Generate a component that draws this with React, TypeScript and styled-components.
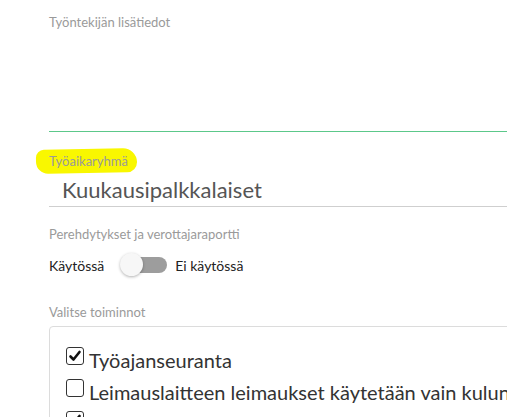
import React from "react";
import styled, { createGlobalStyle } from "styled-components";

const Global = createGlobalStyle`
  html, body { margin: 0; padding: 0; background: #fff; }
  body { font-family: Lato, "Open Sans", sans-serif; overflow: hidden; }
`;

const Page = styled.div`
  width: 507px;
  height: 417px;
  overflow: hidden;
  padding-left: 49px;
  box-sizing: border-box;
`;

const FieldLabel = styled.div<{ $top: number }>`
  font-size: 13px;
  line-height: 16px;
  color: #9a9a9a;
  margin-top: ${(p) => p.$top}px;
  white-space: nowrap;
`;

const HighlightWrap = styled.div`
  position: relative;
  z-index: 0;
`;

const Highlight = styled.span`
  display: inline-block;
  position: relative;
  &::before {
    content: "";
    position: absolute;
    left: -13px;
    right: -9px;
    top: -4px;
    bottom: -4px;
    background: #f9f700;
    border-radius: 8px 14px 10px 12px;
    transform: rotate(-1deg);
    z-index: -1;
  }
`;

const TextArea = styled.div`
  height: 101px;
  width: 600px;
  border-bottom: 1px solid #5cc88a;
`;

const SelectBox = styled.div`
  width: 600px;
  height: 33px;
  margin-top: 5px;
  border-bottom: 1px solid #cfcfcf;
  padding-left: 13px;
  font-size: 22px;
  line-height: 31px;
  color: #555;
  box-sizing: border-box;
`;

const ToggleRow = styled.div`
  display: flex;
  align-items: center;
  height: 26px;
  margin-top: 10px;
  font-size: 14px;
  color: #222;
  white-space: nowrap;
`;

const Track = styled.div`
  position: relative;
  width: 36px;
  height: 16px;
  border-radius: 8px;
  background: #9d9d9d;
  margin: 0 8px 0 27px;
`;

const Thumb = styled.div`
  position: absolute;
  left: -11px;
  top: -4px;
  width: 23px;
  height: 23px;
  border-radius: 50%;
  background: #f7f7f7;
  box-shadow: 0 1px 3px rgba(0, 0, 0, 0.3);
`;

const OptionsBox = styled.div`
  margin-top: 6px;
  width: 620px;
  height: 140px;
  border: 1px solid #dcdcdc;
  border-radius: 4px;
  padding: 17px 0 0 16px;
  box-sizing: border-box;
`;

const Option = styled.div`
  display: flex;
  align-items: center;
  height: 32px;
  font-size: 20px;
  color: #333;
  white-space: nowrap;
`;

const Box = styled.span`
  display: inline-flex;
  align-items: center;
  justify-content: center;
  width: 18px;
  height: 18px;
  border: 1.5px solid #333;
  border-radius: 3px;
  box-sizing: border-box;
  margin-right: 5px;
  margin-top: -8px;
  flex-shrink: 0;
`;

const Check = () => (
  <svg width="14" height="14" viewBox="0 0 14 14">
    <path d="M2.5 7.5 L5.5 10.5 L11.5 3" fill="none" stroke="#111" strokeWidth="2.6" strokeLinecap="round" strokeLinejoin="round" />
  </svg>
);

const options = [
  { label: "Työajanseuranta", checked: true },
  { label: "Leimauslaitteen leimaukset käytetään vain kulunvalvontaan", checked: false },
  { label: "Projektit", checked: true },
];

export default function App() {
  return (
    <Page>
      <Global />
      <FieldLabel $top={14}>Työntekijän lisätiedot</FieldLabel>
      <TextArea />
      <HighlightWrap>
        <FieldLabel $top={21}>
          <Highlight>Työaikaryhmä</Highlight>
        </FieldLabel>
      </HighlightWrap>
      <SelectBox>Kuukausipalkkalaiset</SelectBox>
      <FieldLabel $top={19}>Perehdytykset ja verottajaraportti</FieldLabel>
      <ToggleRow>
        Käytössä
        <Track>
          <Thumb />
        </Track>
        Ei käytössä
      </ToggleRow>
      <FieldLabel $top={26}>Valitse toiminnot</FieldLabel>
      <OptionsBox>
        {options.map((o) => (
          <Option key={o.label}>
            <Box>{o.checked && <Check />}</Box>
            {o.label}
          </Option>
        ))}
      </OptionsBox>
    </Page>
  );
}
